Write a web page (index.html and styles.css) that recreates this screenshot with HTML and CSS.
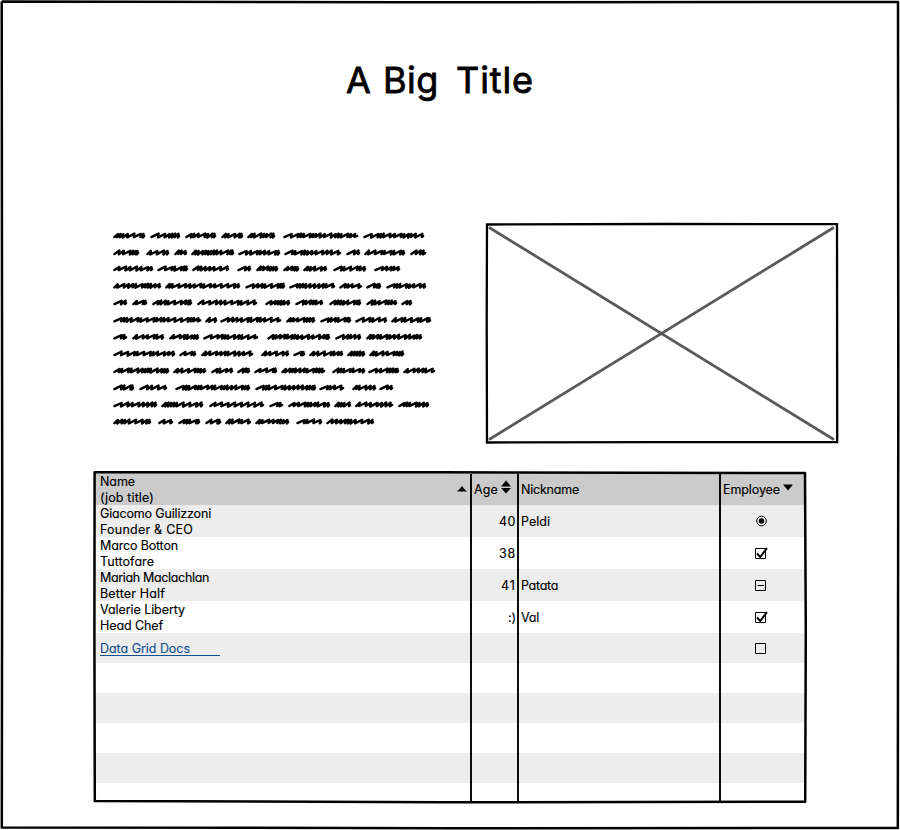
FILE: index.html
```
<!DOCTYPE html>
<html lang="en">
<head>
<meta charset="utf-8">
<title>A Big Title</title>
<link rel="stylesheet" href="styles.css">
</head>
<body>
<main class="page">
  <svg class="ink" viewBox="0 0 900 830"><path d="M1.7 1.5L400 2.3L898 2L898.3 400L897.8 828L450 828.2L1.8 827.4L2.2 500L1.7 1.5"/></svg>
  <h1 class="title"><span data-w="24">A</span> <span data-w="56">Big</span> <span data-w="78">Title</span></h1>
  <section class="intro">
    <svg class="scribble" viewBox="0 0 340 210" id="scribble"></svg>
    <svg class="picture" viewBox="0 0 354 222">
      <path class="cross" d="M5 6L348 217M348 6L5 217"/>
      <path class="edge" d="M2 2.5L180 2L352 2.2L352.2 220L180 220.2L2 220.5L1.7 100Z"/>
    </svg>
  </section>
  <section class="grid">
    <div class="row head">
      <div class="cell name"><p><span data-w="35">Name</span></p><p><span data-w="54">(job title)</span></p><svg class="sort" viewBox="0 0 10 14"><path d="M0 9.5Q3 7 5 4Q7 7 10 9.5Z"/></svg></div>
      <div class="cell age"><span data-w="24">Age</span><svg class="sort" viewBox="0 0 10 14"><path d="M0 6.5L5 .5L10 6.5ZM0 8H10L5 13.5Z"/></svg></div>
      <div class="cell nick"><span data-w="58">Nickname</span></div>
      <div class="cell emp"><span data-w="57">Employee</span><svg class="sort" viewBox="0 0 10 14"><path d="M0 4.5H10L5 10.5Z"/></svg></div>
    </div>
    <div class="row">
      <div class="cell name"><p><span data-w="111">Giacomo Guilizzoni</span></p><p><span data-w="93">Founder &amp; CEO</span></p></div>
      <div class="cell age"><span data-w="17">40</span></div>
      <div class="cell nick"><span data-w="29">Peldi</span></div>
      <div class="cell emp"><svg class="mark" viewBox="0 0 16 16"><circle cx="8.5" cy="8" r="4.8"/><circle class="dot" cx="8.5" cy="8" r="2.7"/></svg></div>
    </div>
    <div class="row">
      <div class="cell name"><p><span data-w="78">Marco Botton</span></p><p><span data-w="54">Tuttofare</span></p></div>
      <div class="cell age"><span data-w="17">38</span></div>
      <div class="cell nick"></div>
      <div class="cell emp"><svg class="mark" viewBox="0 0 16 16"><path d="M2.5 3.5h10v10h-10z"/><path class="tick" d="M4 8.5L7.3 12L14 3"/></svg></div>
    </div>
    <div class="row">
      <div class="cell name"><p><span data-w="109">Mariah Maclachlan</span></p><p><span data-w="65">Better Half</span></p></div>
      <div class="cell age"><span data-w="15">41</span></div>
      <div class="cell nick"><span data-w="37">Patata</span></div>
      <div class="cell emp"><svg class="mark" viewBox="0 0 16 16"><path d="M2.5 3.5h10v10h-10zM4.5 8.5h6.5"/></svg></div>
    </div>
    <div class="row">
      <div class="cell name"><p><span data-w="85">Valerie Liberty</span></p><p><span data-w="63">Head Chef</span></p></div>
      <div class="cell age"><span data-w="8">:)</span></div>
      <div class="cell nick"><span data-w="18">Val</span></div>
      <div class="cell emp"><svg class="mark" viewBox="0 0 16 16"><path d="M2.5 3.5h10v10h-10z"/><path class="tick" d="M4 8.5L7.3 12L14 3"/></svg></div>
    </div>
    <div class="row short">
      <div class="cell name"><a class="link"><span data-w="90">Data Grid Docs</span></a></div>
      <div class="cell age"></div>
      <div class="cell nick"></div>
      <div class="cell emp"><svg class="mark" viewBox="0 0 16 16"><path d="M2.5 3.5h10v10h-10z"/></svg></div>
    </div>
    <div class="row short"></div>
    <div class="row short"></div>
    <div class="row short"></div>
    <div class="row short"></div>
    <div class="row last"></div>
    <svg class="rules" viewBox="0 0 714 334"><path d="M1.6 1.2L350 1.3L712 2L712.8 160L712.2 330.8L350 331.2L1.8 330L1.4 160Z"/><path class="rule" d="M378 3V331M425 3V331M627 3V332"/></svg>
  </section>
</main>
<script src="script.js"></script>
</body>
</html>
```
FILE: styles.css
```
* { box-sizing: border-box; }
body { margin: 0; background: #fff; color: #000; font: 12.5px/16px Inter, sans-serif; font-feature-settings: "cv11" 1; }
p { margin: 0; height: 16px; line-height: 18px; }
.page { position: relative; width: 900px; height: 830px; overflow: hidden; }
.ink, .rules { position: absolute; inset: 0; width: 100%; height: 100%; fill: none; stroke: #000; stroke-width: 2.5; stroke-linejoin: round; pointer-events: none; }
.rules .rule { stroke-width: 1.9; }
.title { display: flex; margin: 0; padding: 58px 0 0 346px; height: 222px; font-weight: 400; font-size: 36px; line-height: 44px; gap: 13px; -webkit-text-stroke: .8px #000; }
.title span:last-child { margin-left: 4px; }
.title span, .cell span { display: inline-block; white-space: pre; }
.intro { display: flex; height: 249px; padding-left: 107px; }
.scribble { width: 340px; height: 210px; fill: none; stroke: #000; stroke-width: 2.4; stroke-linecap: round; stroke-linejoin: round; }
.picture { width: 354px; height: 222px; margin-left: 38px; fill: none; stroke: #000; stroke-width: 2.3; }
.picture .cross { stroke: #5a5a5a; stroke-width: 2.8; stroke-linecap: round; }
.grid { position: relative; width: 714px; height: 334px; margin-left: 93px; padding: 2px 2px 0; -webkit-text-stroke: .15px currentColor; }
.row { display: grid; grid-template-columns: 376px 47px 202px 1fr; height: 32px; }
.row:nth-child(even) { background: #ededed; }
.row.head { background: #cbcbcb; }
.row.short { height: 30px; }
.row.last { height: 18px; }
.cell { display: flex; align-items: center; }
.cell > span { padding-top: 2px; }
.name { position: relative; flex-direction: column; align-items: flex-start; justify-content: center; padding-left: 5px; }
.age { justify-content: flex-end; padding-right: 2px; }
.nick { padding-left: 3px; }
.emp { justify-content: center; }
.head .age, .head .emp { justify-content: flex-start; padding: 0 0 0 3px; }
.sort { width: 10px; height: 14px; margin: -4px 0 0 3px; }
.name .sort { position: absolute; right: 4px; top: 13px; }
.mark { width: 16px; height: 16px; margin-right: 3px; fill: none; stroke: #000; stroke-width: 1; }
.mark .dot { fill: #000; stroke: none; }
.mark .tick { stroke-width: 2; }
.link { width: 120px; height: 15px; border-bottom: 1px solid #11508f; color: #11508f; line-height: 15px; }
```
FILE: script.js
```
// Track each label to its nominal width.
document.querySelectorAll('[data-w]').forEach(function (el) {
  var n = el.textContent.length;
  var w = el.getBoundingClientRect().width;
  var s = (Number(el.dataset.w) - w) / n;
  el.style.letterSpacing = s.toFixed(3) + 'px';
});

// Placeholder copy: baseline followed by the start and end of every word.
var lines = [
  [235.5, '113-145 150-180 185-216 221-243 247-275 283-358 363-424'],
  [252.5, '113-139 146-169 174-187 191-234 238-280 284-341 346-360 364-405 410-426'],
  [268.5, '113-153 157-188 192-229 237-251 256-278 283-299 303-327 333-366 374-400'],
  [285.8, '113-161 165-240 245-285 289-335 339-362 366-381 386-426'],
  [302.5, '113-127 132-147 152-192 197-257 265-290 295-323 329-361 366-397 401-412'],
  [319.8, '113-201 205-217 220-281 286-315 320-351 355-387 391-431'],
  [336.8, '113-127 132-164 169-199 203-258 267-330 335-361 366-422'],
  [353.5, '113-175 179-196 201-253 261-289 293-305 309-343 347-365 369-404'],
  [370.5, '113-169 173-206 211-233 237-250 254-277 281-325 332-365 368-399 403-435'],
  [387.5, '113-134 139-167 175-250 255-316 319-344 352-376 379-393'],
  [404.5, '113-157 161-203 209-264 269-283 288-330 334-351 355-393 398-429'],
  [421.5, '113-151 158-173 178-200 205-221 225-251 255-289 296-322 326-374']
];
var seed = 7;
function rnd() { seed = (seed * 16807) % 2147483647; return seed / 2147483647; }
var d = '';
lines.forEach(function (line) {
  line[1].split(' ').forEach(function (word) {
    var p = word.split('-').map(Number);
    var x = p[0] - 105.6, end = p[1] - 108.5, y = line[0] - 222;
    d += 'M' + x + ' ' + (y + 1.6);
    while (x < end - 2) {
      var r = rnd();
      var step = r < 0.4 ? 3.4 : r < 0.7 ? 5 : 7.2;
      var top = Math.min(x + step, end);
      d += 'L' + top.toFixed(1) + ' ' + (y - 2 + rnd() * 0.6).toFixed(1);
      x = top - 0.6;
      d += 'L' + x.toFixed(1) + ' ' + (y + 1.5 + rnd() * 0.6).toFixed(1);
    }
    d += 'L' + (end + 0.6) + ' ' + (y + 0.5);
  });
});
document.getElementById('scribble').innerHTML = '<path d="' + d + '"/>';
```
